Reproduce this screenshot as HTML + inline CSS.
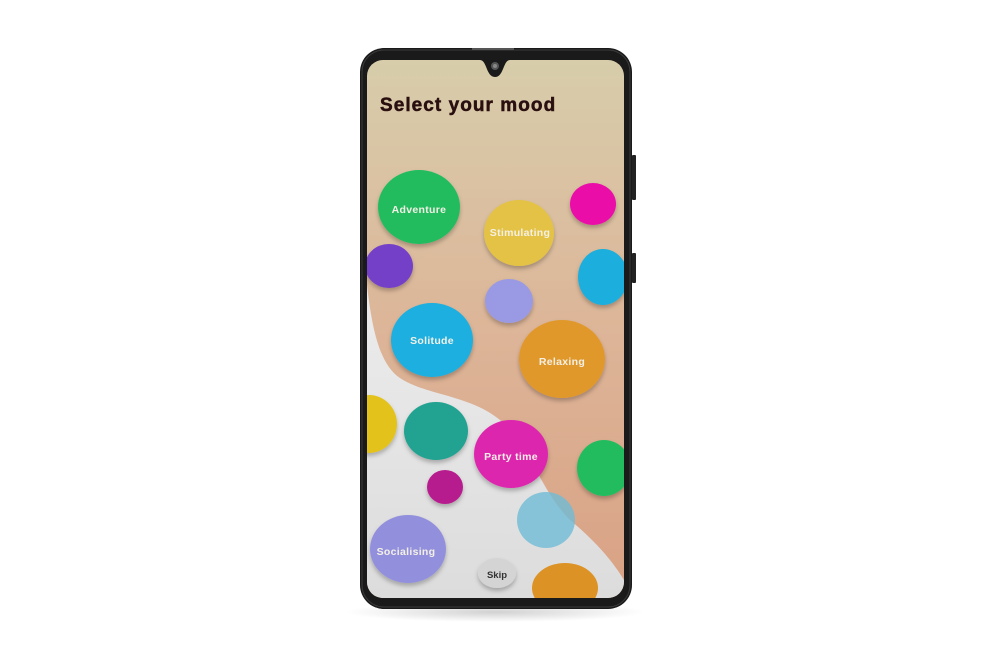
<!DOCTYPE html>
<html><head><meta charset="utf-8"><style>
html,body{margin:0;padding:0;background:#fff;width:1000px;height:667px;overflow:hidden}
svg{display:block}
text{font-family:"Liberation Sans",sans-serif;font-weight:bold}
</style></head><body>
<svg width="1000" height="667" viewBox="0 0 1000 667" xmlns="http://www.w3.org/2000/svg">
<defs>
<linearGradient id="bg" x1="0" y1="0" x2="0" y2="1">
<stop offset="0" stop-color="#d7cdab"/><stop offset="0.5" stop-color="#ddb598"/><stop offset="1" stop-color="#d9a184"/>
</linearGradient>
<linearGradient id="wg" x1="0" y1="0" x2="0" y2="1">
<stop offset="0" stop-color="#ececec"/><stop offset="1" stop-color="#dcdcdc"/>
</linearGradient>
<clipPath id="scr"><rect x="367" y="60" width="257" height="538" rx="16"/></clipPath>
<filter id="sh" x="-30%" y="-30%" width="160%" height="170%"><feDropShadow dx="0" dy="3" stdDeviation="2" flood-color="#000" flood-opacity="0.25"/></filter>
<radialGradient id="fl" cx="0.5" cy="0.5" r="0.5"><stop offset="0" stop-color="#000" stop-opacity="0.18"/><stop offset="1" stop-color="#000" stop-opacity="0"/></radialGradient>
</defs>
<ellipse cx="495" cy="612" rx="150" ry="10" fill="url(#fl)"/>
<rect x="632" y="155" width="4" height="45" rx="1" fill="#222"/>
<rect x="632" y="253" width="4" height="30" rx="1" fill="#222"/>
<rect x="360" y="48" width="272" height="561" rx="24" fill="#1a1a1a"/>
<rect x="362" y="50" width="268" height="557" rx="22" fill="none" stroke="#3a3a3a" stroke-width="1"/>
<rect x="472" y="48" width="42" height="2" fill="#555"/>
<g clip-path="url(#scr)">
<rect x="367" y="60" width="257" height="538" fill="url(#bg)"/>
<path d="M367 285 C372 330 380 365 400 378 C425 395 470 395 500 420 C530 445 540 490 570 520 C600 545 615 565 624 580 L624 600 L367 600 Z" fill="url(#wg)"/>
<g filter="url(#sh)">
<ellipse cx="419" cy="207" rx="41" ry="37" fill="#22bc5e"/>
<ellipse cx="519" cy="233" rx="35" ry="33" fill="#e3c244"/>
<ellipse cx="593" cy="204" rx="23" ry="21" fill="#ea0aa8"/>
<ellipse cx="389" cy="266" rx="24" ry="22" fill="#7440c8"/>
<ellipse cx="603" cy="277" rx="25" ry="28" fill="#1baedc"/>
<ellipse cx="509" cy="301" rx="24" ry="22" fill="#9a9ae4"/>
<ellipse cx="432" cy="340" rx="41" ry="37" fill="#1aafdf"/>
<ellipse cx="562" cy="359" rx="43" ry="39" fill="#e1982a"/>
<ellipse cx="369" cy="424" rx="28" ry="29" fill="#e3c21e"/>
<ellipse cx="436" cy="431" rx="32" ry="29" fill="#22a290"/>
<ellipse cx="511" cy="454" rx="37" ry="34" fill="#dd28ae"/>
<ellipse cx="604" cy="468" rx="27" ry="28" fill="#22bc5e"/>
<ellipse cx="445" cy="487" rx="18" ry="17" fill="#b61e8e"/>
<ellipse cx="408" cy="549" rx="38" ry="34" fill="#9290dc"/>
<ellipse cx="497" cy="573" rx="19" ry="15" fill="#d4d4d4"/>
</g>
<ellipse cx="546" cy="520" rx="29" ry="28" fill="#6fbcd6" opacity="0.8"/>
<ellipse cx="565" cy="588" rx="33" ry="25" fill="#dc9225"/>
<text x="380" y="111" font-size="19" fill="#2a0f10" font-weight="900" letter-spacing="1.05" stroke="#2a0f10" stroke-width="0.5">Select your mood</text>
<g fill="#f4f0e6" font-size="10.5" text-anchor="middle" letter-spacing="0.3">
<text x="419" y="213">Adventure</text>
<text x="520" y="236">Stimulating</text>
<text x="432" y="344">Solitude</text>
<text x="562" y="365">Relaxing</text>
<text x="511" y="460">Party time</text>
<text x="406" y="555">Socialising</text>
</g>
<text x="497" y="578" font-size="9.5" fill="#333" text-anchor="middle" font-weight="normal">Skip</text>
<path d="M480 60 C487 60 486 77 495 77 C504 77 503 60 510 60 Z" fill="#1a1a1a"/>
<circle cx="495" cy="66" r="4" fill="#555"/><circle cx="495" cy="66" r="2" fill="#888"/>
</g>
</svg>
</body></html>
